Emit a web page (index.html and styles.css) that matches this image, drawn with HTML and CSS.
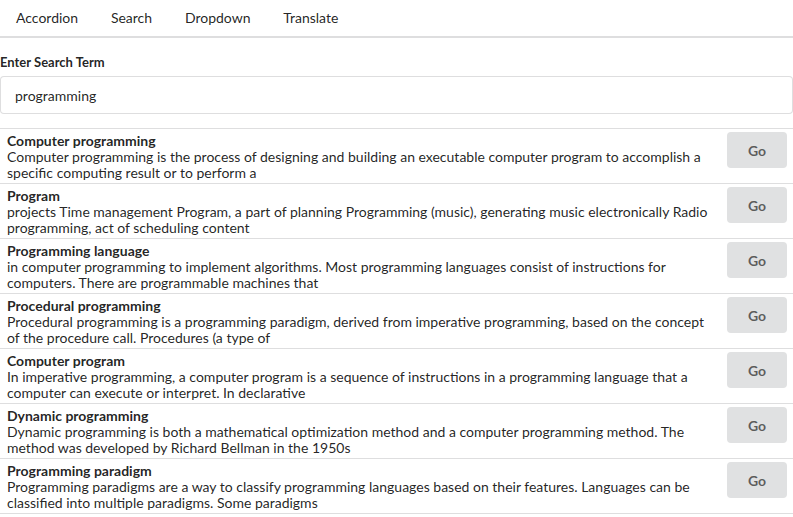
FILE: index.html
```html
<!DOCTYPE html>
<html>
<head>
<meta charset="utf-8">
<link rel="stylesheet" href="styles.css">
</head>
<body>
<nav class="menu">
  <a class="menu-item">Accordion</a>
  <a class="menu-item">Search</a>
  <a class="menu-item">Dropdown</a>
  <a class="menu-item">Translate</a>
</nav>
<div class="form">
  <div class="field">
    <label class="field-label">Enter Search Term</label>
    <input class="input" type="text" value="programming">
  </div>
</div>
<div class="list">
  <div class="item">
    <div class="content">
      <div class="header">Computer programming</div>
      <div class="description">Computer programming is the process of designing and building an executable computer program to accomplish a specific computing result or to perform a</div>
    </div>
    <button class="button">Go</button>
  </div>
  <div class="item">
    <div class="content">
      <div class="header">Program</div>
      <div class="description">projects Time management Program, a part of planning Programming (music), generating music electronically Radio programming, act of scheduling content</div>
    </div>
    <button class="button">Go</button>
  </div>
  <div class="item">
    <div class="content">
      <div class="header">Programming language</div>
      <div class="description">in computer programming to implement algorithms. Most programming languages consist of instructions for computers. There are programmable machines that</div>
    </div>
    <button class="button">Go</button>
  </div>
  <div class="item">
    <div class="content">
      <div class="header">Procedural programming</div>
      <div class="description">Procedural programming is a programming paradigm, derived from imperative programming, based on the concept of the procedure call. Procedures (a type of</div>
    </div>
    <button class="button">Go</button>
  </div>
  <div class="item">
    <div class="content">
      <div class="header">Computer program</div>
      <div class="description">In imperative programming, a computer program is a sequence of instructions in a programming language that a computer can execute or interpret. In declarative</div>
    </div>
    <button class="button">Go</button>
  </div>
  <div class="item">
    <div class="content">
      <div class="header">Dynamic programming</div>
      <div class="description">Dynamic programming is both a mathematical optimization method and a computer programming method. The method was developed by Richard Bellman in the 1950s</div>
    </div>
    <button class="button">Go</button>
  </div>
  <div class="item">
    <div class="content">
      <div class="header">Programming paradigm</div>
      <div class="description">Programming paradigms are a way to classify programming languages based on their features. Languages can be classified into multiple paradigms. Some paradigms</div>
    </div>
    <button class="button">Go</button>
  </div>
</div>
</body>
</html>
```
FILE: styles.css
```css
html, body {
  margin: 0;
  padding: 0;
  background: #ffffff;
}
body {
  font-family: Lato, "Liberation Sans", sans-serif;
  font-size: 14px;
  color: rgba(0, 0, 0, 0.87);
}
.menu {
  display: flex;
  border-bottom: 2px solid rgba(34, 36, 38, 0.15);
}
.menu-item {
  padding: 11px 16.4px;
  line-height: 14px;
  color: rgba(0, 0, 0, 0.87);
  cursor: pointer;
}
.menu-item:first-child {
  padding-left: 16px;
}
.form {
  padding-top: 15px;
}
.field {
  margin-bottom: 14px;
}
.field-label {
  display: block;
  font-size: 13px;
  font-weight: 700;
  line-height: 18.57px;
  margin-bottom: 4px;
}
.input {
  display: block;
  box-sizing: border-box;
  width: 100%;
  height: 38px;
  margin: 0;
  font-family: Lato, "Liberation Sans", sans-serif;
  font-size: 14px;
  line-height: 17px;
  padding: 10px 14px 9px;
  border: 1px solid rgba(34, 36, 38, 0.15);
  border-radius: 4px;
  color: rgba(0, 0, 0, 0.87);
  outline: none;
  background: #fff;
}
.list {
  display: flex;
  flex-direction: column;
}
.item {
  display: flex;
  align-items: flex-start;
  padding: 3px 6px 3px 7px;
  border-top: 1px solid rgba(34, 36, 38, 0.15);
  line-height: 16px;
}
.item:last-child {
  border-bottom: 1px solid rgba(34, 36, 38, 0.15);
}
.content {
  flex: 1;
  min-width: 0;
  padding: 1px 0 0;
  height: 47px;
}
.header {
  font-weight: 700;
  color: rgba(0, 0, 0, 0.87);
}
.description {
  color: rgba(0, 0, 0, 0.87);
}
.button {
  flex: none;
  margin-left: 14px;
  font-family: Lato, "Liberation Sans", sans-serif;
  font-size: 14px;
  font-weight: 700;
  line-height: 14px;
  padding: 12px 21px 10px;
  border: none;
  border-radius: 4px;
  background: #e0e1e2;
  color: rgba(0, 0, 0, 0.6);
  cursor: pointer;
}
```
